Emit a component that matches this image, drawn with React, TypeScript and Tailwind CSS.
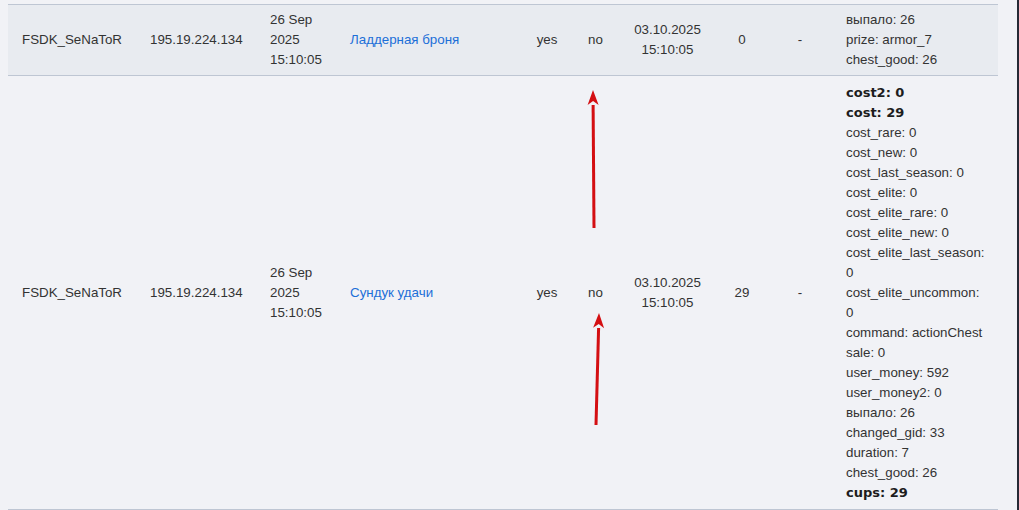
import type { ReactNode } from "react";

type Row = {
  user: string;
  ip: string;
  date: string[];
  item: string;
  flagA: string;
  flagB: string;
  until: string[];
  cost: string;
  extra: string;
  details: ReactNode;
};

function Line({ children, bold }: { children: ReactNode; bold?: boolean }) {
  return (
    <div
      className={
        bold ? "font-['DejaVu_Sans',sans-serif] text-[13px] font-bold text-[#1d1d1d]" : ""
      }
    >
      {children}
    </div>
  );
}

const rows: Row[] = [
  {
    user: "FSDK_SeNaToR",
    ip: "195.19.224.134",
    date: ["26 Sep", "2025", "15:10:05"],
    item: "Ладдерная броня",
    flagA: "yes",
    flagB: "no",
    until: ["03.10.2025", "15:10:05"],
    cost: "0",
    extra: "-",
    details: (
      <>
        <Line>выпало: 26</Line>
        <Line>prize: armor_7</Line>
        <Line>chest_good: 26</Line>
      </>
    ),
  },
  {
    user: "FSDK_SeNaToR",
    ip: "195.19.224.134",
    date: ["26 Sep", "2025", "15:10:05"],
    item: "Сундук удачи",
    flagA: "yes",
    flagB: "no",
    until: ["03.10.2025", "15:10:05"],
    cost: "29",
    extra: "-",
    details: (
      <>
        <Line bold>cost2: 0</Line>
        <Line bold>cost: 29</Line>
        <Line>cost_rare: 0</Line>
        <Line>cost_new: 0</Line>
        <Line>cost_last_season: 0</Line>
        <Line>cost_elite: 0</Line>
        <Line>cost_elite_rare: 0</Line>
        <Line>cost_elite_new: 0</Line>
        <Line>cost_elite_last_season: 0</Line>
        <Line>cost_elite_uncommon: 0</Line>
        <Line>command: actionChest</Line>
        <Line>sale: 0</Line>
        <Line>user_money: 592</Line>
        <Line>user_money2: 0</Line>
        <Line>выпало: 26</Line>
        <Line>changed_gid: 33</Line>
        <Line>duration: 7</Line>
        <Line>chest_good: 26</Line>
        <Line bold>cups: 29</Line>
      </>
    ),
  },
];

function Arrow({ x1, y1, x2, y2 }: { x1: number; y1: number; x2: number; y2: number }) {
  const dx = x2 - x1;
  const dy = y2 - y1;
  const len = Math.hypot(dx, dy);
  const ux = dx / len;
  const uy = dy / len;
  const bx = x2 - ux * 15;
  const by = y2 - uy * 15;
  const px = -uy * 5.5;
  const py = ux * 5.5;
  return (
    <>
      <line x1={x1} y1={y1} x2={bx} y2={by} stroke="#d40f12" strokeWidth="3" />
      <polygon
        points={`${x2},${y2} ${bx + px},${by + py} ${bx + ux * 4},${by + uy * 4} ${bx - px},${by - py}`}
        fill="#d40f12"
      />
    </>
  );
}

export default function App() {
  return (
    <div className="relative flex h-[510px] w-[1019px] overflow-hidden bg-[#f1f2f6] font-['Liberation_Sans',Arial,sans-serif] text-[13.33px] leading-5 text-[#333]">
      <div className="flex-1 pl-2 pt-1">
        <table className="w-[990px] table-fixed border-collapse">
          <colgroup>
            <col className="w-[128px]" />
            <col className="w-[120px]" />
            <col className="w-[80px]" />
            <col className="w-[186px]" />
            <col className="w-[50px]" />
            <col className="w-[47px]" />
            <col className="w-[97px]" />
            <col className="w-[52px]" />
            <col className="w-[64px]" />
            <col className="w-[166px]" />
          </colgroup>
          <tbody>
            {rows.map((r, i) => {
              const pad = i === 0 ? "pt-[5px] pb-[5px]" : "pt-[7px] pb-[6px]";
              return (
                <tr
                  key={i}
                  className={`border-y border-[#bec6d3] align-middle ${
                    i === 0 ? "bg-[#e8ebf0]" : ""
                  }`}
                >
                  <td className={`px-[14px] ${pad}`}>{r.user}</td>
                  <td className="px-[14px]">{r.ip}</td>
                  <td className={`px-[14px] ${pad}`}>
                    {r.date.map((d) => (
                      <div key={d}>{d}</div>
                    ))}
                  </td>
                  <td className="px-[14px]">
                    <span className="text-[#1c6fd8]">{r.item}</span>
                  </td>
                  <td className="text-center">{r.flagA}</td>
                  <td className="text-center">{r.flagB}</td>
                  <td className="text-center">
                    {r.until.map((d) => (
                      <div key={d}>{d}</div>
                    ))}
                  </td>
                  <td className="text-center">{r.cost}</td>
                  <td className="text-center">{r.extra}</td>
                  <td className={`pl-[14px] pr-[11px] break-words ${pad}`}>{r.details}</td>
                </tr>
              );
            })}
          </tbody>
        </table>
      </div>
      <div className="w-[2px] bg-[#262a35]" />
      <svg className="pointer-events-none absolute inset-0" width="1019" height="510">
        <Arrow x1={594} y1={228} x2={593} y2={90} />
        <Arrow x1={596} y1={425} x2={599} y2={313} />
      </svg>
    </div>
  );
}
